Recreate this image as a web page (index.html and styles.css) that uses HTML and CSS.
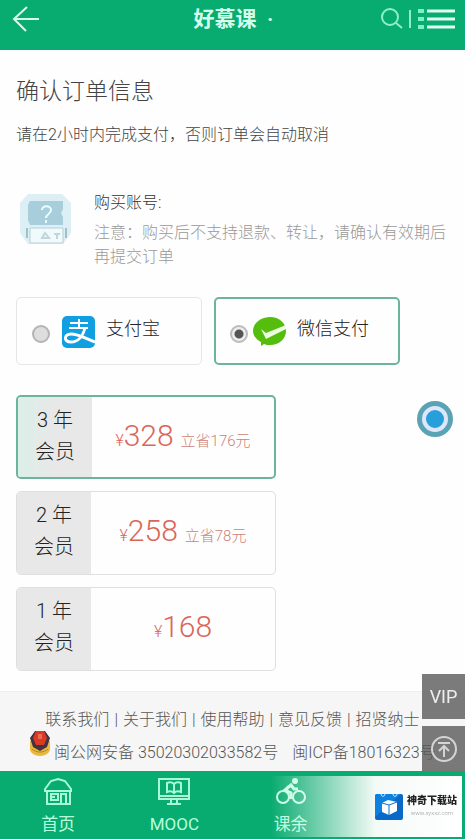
FILE: index.html
```
<!DOCTYPE html>
<html lang="zh-CN">
<head>
  <meta charset="UTF-8">
  <meta name="viewport" content="width=device-width, initial-scale=1">
  <title>好慕课</title>
  <link rel="stylesheet" href="styles.css">
</head>
<body>
  <header class="header">
    <button class="icon-btn" aria-label="返回">
      <svg width="28" height="28" viewBox="0 0 28 28" fill="none" stroke="#d9fbea" stroke-width="2"><path d="M27 14H2M15 2L2 14l12 12"/></svg>
    </button>
    <h1>好慕课&nbsp; ·</h1>
    <div class="header-actions">
      <button class="icon-btn" aria-label="搜索">
        <svg width="24" height="24" viewBox="0 0 24 24" fill="none" stroke="#8ff0c8" stroke-width="2"><circle cx="11" cy="10" r="8"/><path d="M17 16l6 5"/></svg>
      </button>
      <span class="divider"></span>
      <button class="icon-btn" aria-label="菜单">
        <svg width="38" height="24" viewBox="0 0 38 24" fill="none" stroke="#e0fff2" stroke-width="3"><path d="M10 4h28M10 12h28M10 20h28"/><path stroke="#7df0c4" stroke-width="4" d="M1 4h6M1 12h6M1 20h6"/></svg>
      </button>
    </div>
  </header>

  <main class="content">
    <h2>确认订单信息</h2>
    <p class="tip">请在2小时内完成支付，否则订单会自动取消</p>

    <section class="account">
      <svg class="avatar" width="58" height="58" viewBox="0 0 58 58">
        <path fill="#dceff5" d="M12 3h34l9 9v30l-8 11H12L4 42V12z"/>
        <path fill="#a8cedb" d="M14 10h33v8l-2 4 2 4v8H14l-2-5V14z"/>
        <path fill="none" stroke="#e9ffff" stroke-width="2" d="M26 19c0-5 9-5 9 0 0 4-5 4-5 8M30 29v3"/>
        <path fill="#f0f9fb" stroke="#b4d0d6" d="M14 37h33v15H14z"/>
        <path fill="none" stroke="#9fc0c8" stroke-width="2" d="M11 37v10M50 37v10"/>
        <path fill="none" stroke="#c0d6da" stroke-width="2" d="M26 47l3-5 4 5zM38 43h6M41 43v5"/>
      </svg>
      <div class="account-info">
        <p class="account-name">购买账号:</p>
        <p class="account-note">注意：购买后不支持退款、转让，请确认有效期后再提交订单</p>
      </div>
    </section>

    <!-- 支付方式 -->
    <div class="pay-list">
      <label class="pay-item">
        <input type="radio" name="pay" value="alipay">
        <svg class="pay-logo" width="34" height="34" viewBox="0 0 34 34">
          <rect x="0" y="1" width="33" height="32" rx="5" fill="#109fe0"/>
          <path fill="none" stroke="#fff" stroke-width="2" d="M8 8h18M17 4v9M7 13h19"/>
          <path fill="none" stroke="#fff" stroke-width="3" d="M23 13c-2 8-7 14-14 14-8 0-7-8 0-8 8 0 15 5 24 8"/>
        </svg>
        <span>支付宝</span>
      </label>
      <label class="pay-item">
        <input type="radio" name="pay" value="wechat" checked>
        <svg class="pay-logo wechat" width="34" height="34" viewBox="0 0 34 34">
          <path fill="#55bd0b" d="M17 2c9 0 16 6 16 14s-7 14-16 14c-2 0-4 0-6-1l-3 2v-4C4 25 0 21 0 16 0 8 8 2 17 2z"/>
          <path fill="#e9ffe0" d="M8 14l5 4 20-8v4L13 24z"/>
        </svg>
        <span>微信支付</span>
      </label>
    </div>

    <!-- 会员套餐 -->
    <div class="plan-list">
      <label class="plan-item">
        <input type="radio" name="plan" value="3" checked>
        <span class="plan-name">3 年<br>会员</span>
        <span class="plan-price"><i>¥</i><b>328</b><em>立省176元</em></span>
      </label>
      <label class="plan-item">
        <input type="radio" name="plan" value="2">
        <span class="plan-name">2 年<br>会员</span>
        <span class="plan-price"><i>¥</i><b>258</b><em>立省78元</em></span>
      </label>
      <label class="plan-item">
        <input type="radio" name="plan" value="1">
        <span class="plan-name">1 年<br>会员</span>
        <span class="plan-price"><i>¥</i><b>168</b></span>
      </label>
    </div>
  </main>

  <footer class="footer">
    <div class="footer-links">
      <a href="#">联系我们</a>|
      <a href="#">关于我们</a>|
      <a href="#">使用帮助</a>|
      <a href="#">意见反馈</a>|
      <a href="#">招贤纳士</a>
    </div>
    <div class="footer-record">
      <svg width="24" height="28" viewBox="0 0 24 28">
        <path fill="#e8b93c" d="M2 11h20v8c0 4-5 7-10 7S2 23 2 19z"/>
        <path fill="#453240" d="M7 1h10l5 7-3 9-7 4-7-4-3-9z"/>
        <path fill="#d93a25" d="M8 1h8l3 7-3 7H8L5 8z"/>
        <path fill="#ef6a4a" d="M10 4h4v5h-4z"/>
        <path fill="none" stroke="#b88722" d="M4 19c4 4 12 4 16 0"/>
      </svg>
      <span>闽公网安备 35020302033582号</span>
      <span class="icp">闽ICP备18016323号</span>
    </div>
  </footer>

  <nav class="tabbar">
    <a href="#">
      <svg width="30" height="30" viewBox="0 0 30 30" fill="none" stroke="#a8fbd6" stroke-width="2"><path d="M4 13v14h23V13M2 12l6-8 7-2 7 2 6 8v2H2zM8 17h7v6H8zM18 27V17h5v10M8 20h4"/></svg>
      <span>首页</span>
    </a>
    <a href="#">
      <svg width="34" height="30" viewBox="0 0 34 30" fill="none" stroke="#a8fbd6" stroke-width="2"><path d="M2 2h30v20H2zM2 19h30M14 22v4M20 22v4M10 27h14M17 7v9M17 7c-2-2-5-2-7-1v9c2-1 5-1 7 1 2-2 5-2 7-1V6c-2-1-5-1-7 1z"/></svg>
      <span>MOOC</span>
    </a>
    <a href="#">
      <svg width="30" height="30" viewBox="0 0 30 30" fill="none" stroke="#c4ffe3" stroke-width="2"><circle cx="7" cy="20" r="6"/><circle cx="23" cy="20" r="6"/><circle cx="19" cy="4" r="2" fill="#c4ffe3"/><path stroke-width="3" d="M22 12h-4l-3-4-6 5 6 3v6M15 8l-4 3"/></svg>
      <span>课余</span>
    </a>
    <a href="#" aria-label="我的"></a>
  </nav>

  <button class="float-ball" aria-label="快捷菜单">
    <svg width="40" height="40" viewBox="0 0 40 40"><circle cx="20" cy="20" r="18" fill="#5aa3b4"/><circle cx="20" cy="20" r="11" fill="#279fda" stroke="#dde6fb" stroke-width="4"/></svg>
  </button>

  <div class="side-tools">
    <button>VIP</button>
    <button aria-label="回到顶部">
      <svg width="28" height="28" viewBox="0 0 28 28" fill="none" stroke="#d4d4d4" stroke-width="2"><circle cx="14" cy="14" r="12"/><path d="M8 8h12M14 22V11M9 16l5-5 5 5"/></svg>
    </button>
  </div>

  <div class="download-mark">
    <svg width="28" height="28" viewBox="0 0 28 28">
      <rect y="1" width="28" height="26" rx="2" fill="#0968c8"/>
      <path fill="#0b82e0" d="M0 3c0-1 1-2 2-2h24L0 24z"/>
      <path fill="none" stroke="#d8efff" d="M6 1c0 3 4 3 4 0M18 1c0 3 4 3 4 0"/>
      <path fill="#fff" d="M7 10l6-3 9 2v9l-8 4-7-3z"/>
      <path fill="none" stroke="#0b6fcf" d="M7 10l7 2 8-3M14 12v10"/>
    </svg>
    <div class="download-text">
      <strong>神奇下载站</strong>
      <small>www.xyxxz.com</small>
    </div>
  </div>
</body>
</html>
```
FILE: styles.css
```
* {
  box-sizing: border-box;
}

body {
  display: flex;
  flex-direction: column;
  min-height: 100vh;
  margin: 0;
  padding-bottom: 68px;
  font-family: Roboto, "Noto Sans CJK SC", sans-serif;
  font-size: 16px;
  font-weight: 300;
  line-height: 24px;
  color: #444;
  background-color: #fefefe;
}

h1, h2, p {
  margin: 0;
}

a {
  color: inherit;
  text-decoration: none;
}

button {
  padding: 0;
  border: none;
  font-family: inherit;
  cursor: pointer;
}

svg {
  display: block;
  flex-shrink: 0;
}

/* 顶部导航 */
.header {
  display: grid;
  grid-template-columns: 1fr auto 1fr;
  align-items: center;
  height: 50px;
  padding: 0 10px 12px 12px;
  background-color: #08ab70;
}

.header h1 {
  font-size: 21px;
  font-weight: 700;
  color: #d5ffec;
}

.header-actions {
  display: flex;
  justify-content: flex-end;
  align-items: center;
  gap: 6px;
}

.icon-btn {
  justify-self: start;
  background: none;
}

.divider {
  width: 2px;
  height: 18px;
  background-color: #8ff0c8;
}

/* 订单内容 */
.content {
  flex-grow: 1;
  padding: 26px 16px 20px;
}

.content h2 {
  font-size: 23px;
  font-weight: 300;
  line-height: 32px;
}

.tip {
  margin-top: 15px;
}

.account {
  display: flex;
  gap: 20px;
  margin-top: 44px;
}

.account-name {
  margin-bottom: 6px;
  color: #333;
}

.account-note {
  color: #999;
}

/* 支付方式 */
.pay-list {
  display: flex;
  gap: 12px;
  margin-top: 28px;
}

.pay-item {
  display: flex;
  align-items: center;
  flex: 0 1 186px;
  height: 68px;
  padding: 0 15px;
  border: 1px solid #e6e6e6;
  border-radius: 5px;
  font-size: 18px;
  color: #222;
  cursor: pointer;
}

.pay-item input {
  appearance: none;
  width: 18px;
  height: 18px;
  margin: 6px 0 0;
  border: 2px solid #b4b4b4;
  border-radius: 50%;
  background-color: #dedede;
}

.pay-item input:checked {
  border-color: #bbb;
  background: radial-gradient(circle, #555 0 4px, #eee 5px);
}

.pay-logo {
  margin: 2px 10px 0 12px;
}

.pay-logo.wechat {
  margin-left: 5px;
}

.pay-item span {
  padding-bottom: 4px;
}

.pay-item:has(input:checked),
.plan-item:has(input:checked) {
  border: 2px solid #6cb59b;
}

.pay-item:has(input:checked) {
  padding: 0 14px;
}

/* 会员套餐 */
.plan-list {
  display: flex;
  flex-direction: column;
  gap: 12px;
  max-width: 260px;
  margin-top: 30px;
}

.plan-item {
  position: relative;
  display: flex;
  min-height: 84px;
  border: 1px solid #dfdfdf;
  border-radius: 5px;
  overflow: hidden;
  cursor: pointer;
}

.plan-item input {
  position: absolute;
  opacity: 0;
}

.plan-name {
  width: 74px;
  padding-top: 7px;
  font-size: 20px;
  line-height: 32px;
  text-align: center;
  color: #222;
  background-color: #e8e8e8;
}

.plan-item:has(input:checked) .plan-name {
  background: linear-gradient(90deg, #dcefe9, #e8e8e8 50%);
}

.plan-price {
  display: flex;
  flex-grow: 1;
  justify-content: center;
  align-items: baseline;
  padding-top: 23px;
  line-height: 32px;
  color: #d9665a;
}

.plan-price i {
  font-style: normal;
}

.plan-price b {
  font-size: 30px;
  font-weight: 300;
}

.plan-price em {
  margin-left: 7px;
  font-size: 15px;
  font-style: normal;
  color: #d07f75;
}

/* 页脚 */
.footer {
  padding: 16px 16px 4px;
  border-top: 1px solid #eee;
  background-color: #f6f6f6;
  color: #555;
  white-space: nowrap;
}

.footer-links {
  display: flex;
  justify-content: center;
  gap: 5px;
}

.footer-record {
  display: flex;
  gap: 2px;
  padding-left: 12px;
}

.footer-record svg {
  margin-top: -2px;
}

.footer-record span {
  padding: 9px 0 2px;
}

.footer-record .icp {
  margin-left: 12px;
}

/* 底部标签栏 */
.tabbar {
  position: fixed;
  left: 0;
  right: 0;
  bottom: 0;
  display: grid;
  grid-template-columns: repeat(4, 1fr);
  height: 68px;
  background-color: #08ab70;
}

.tabbar a {
  display: flex;
  flex-direction: column;
  align-items: center;
  gap: 5px;
  padding-top: 6px;
  font-size: 17px;
  font-weight: 400;
  color: #b5ffdc;
}

/* 悬浮按钮 */
.float-ball {
  position: fixed;
  right: 10px;
  top: 399px;
  border-radius: 50%;
  background: none;
}

.side-tools {
  position: fixed;
  right: 0;
  bottom: 68px;
  display: flex;
  flex-direction: column;
  gap: 7px;
}

.side-tools button {
  display: flex;
  justify-content: center;
  align-items: center;
  width: 43px;
  height: 45px;
  font-size: 18px;
  font-weight: 400;
  color: #eee;
  background-color: rgba(90, 90, 90, 0.8);
}

.download-mark {
  position: fixed;
  right: 3px;
  bottom: 2px;
  display: flex;
  justify-content: flex-end;
  align-items: center;
  gap: 4px;
  width: 192px;
  height: 61px;
  padding-right: 5px;
  background: linear-gradient(90deg, rgba(255, 255, 255, 0), #f4faf7 55%, #fff);
}

.download-text {
  display: flex;
  flex-direction: column;
  align-items: center;
  line-height: 12px;
}

.download-text strong {
  font-size: 10px;
  font-weight: 900;
  color: #222;
}

.download-text small {
  font-size: 6px;
  color: #999;
}
```
